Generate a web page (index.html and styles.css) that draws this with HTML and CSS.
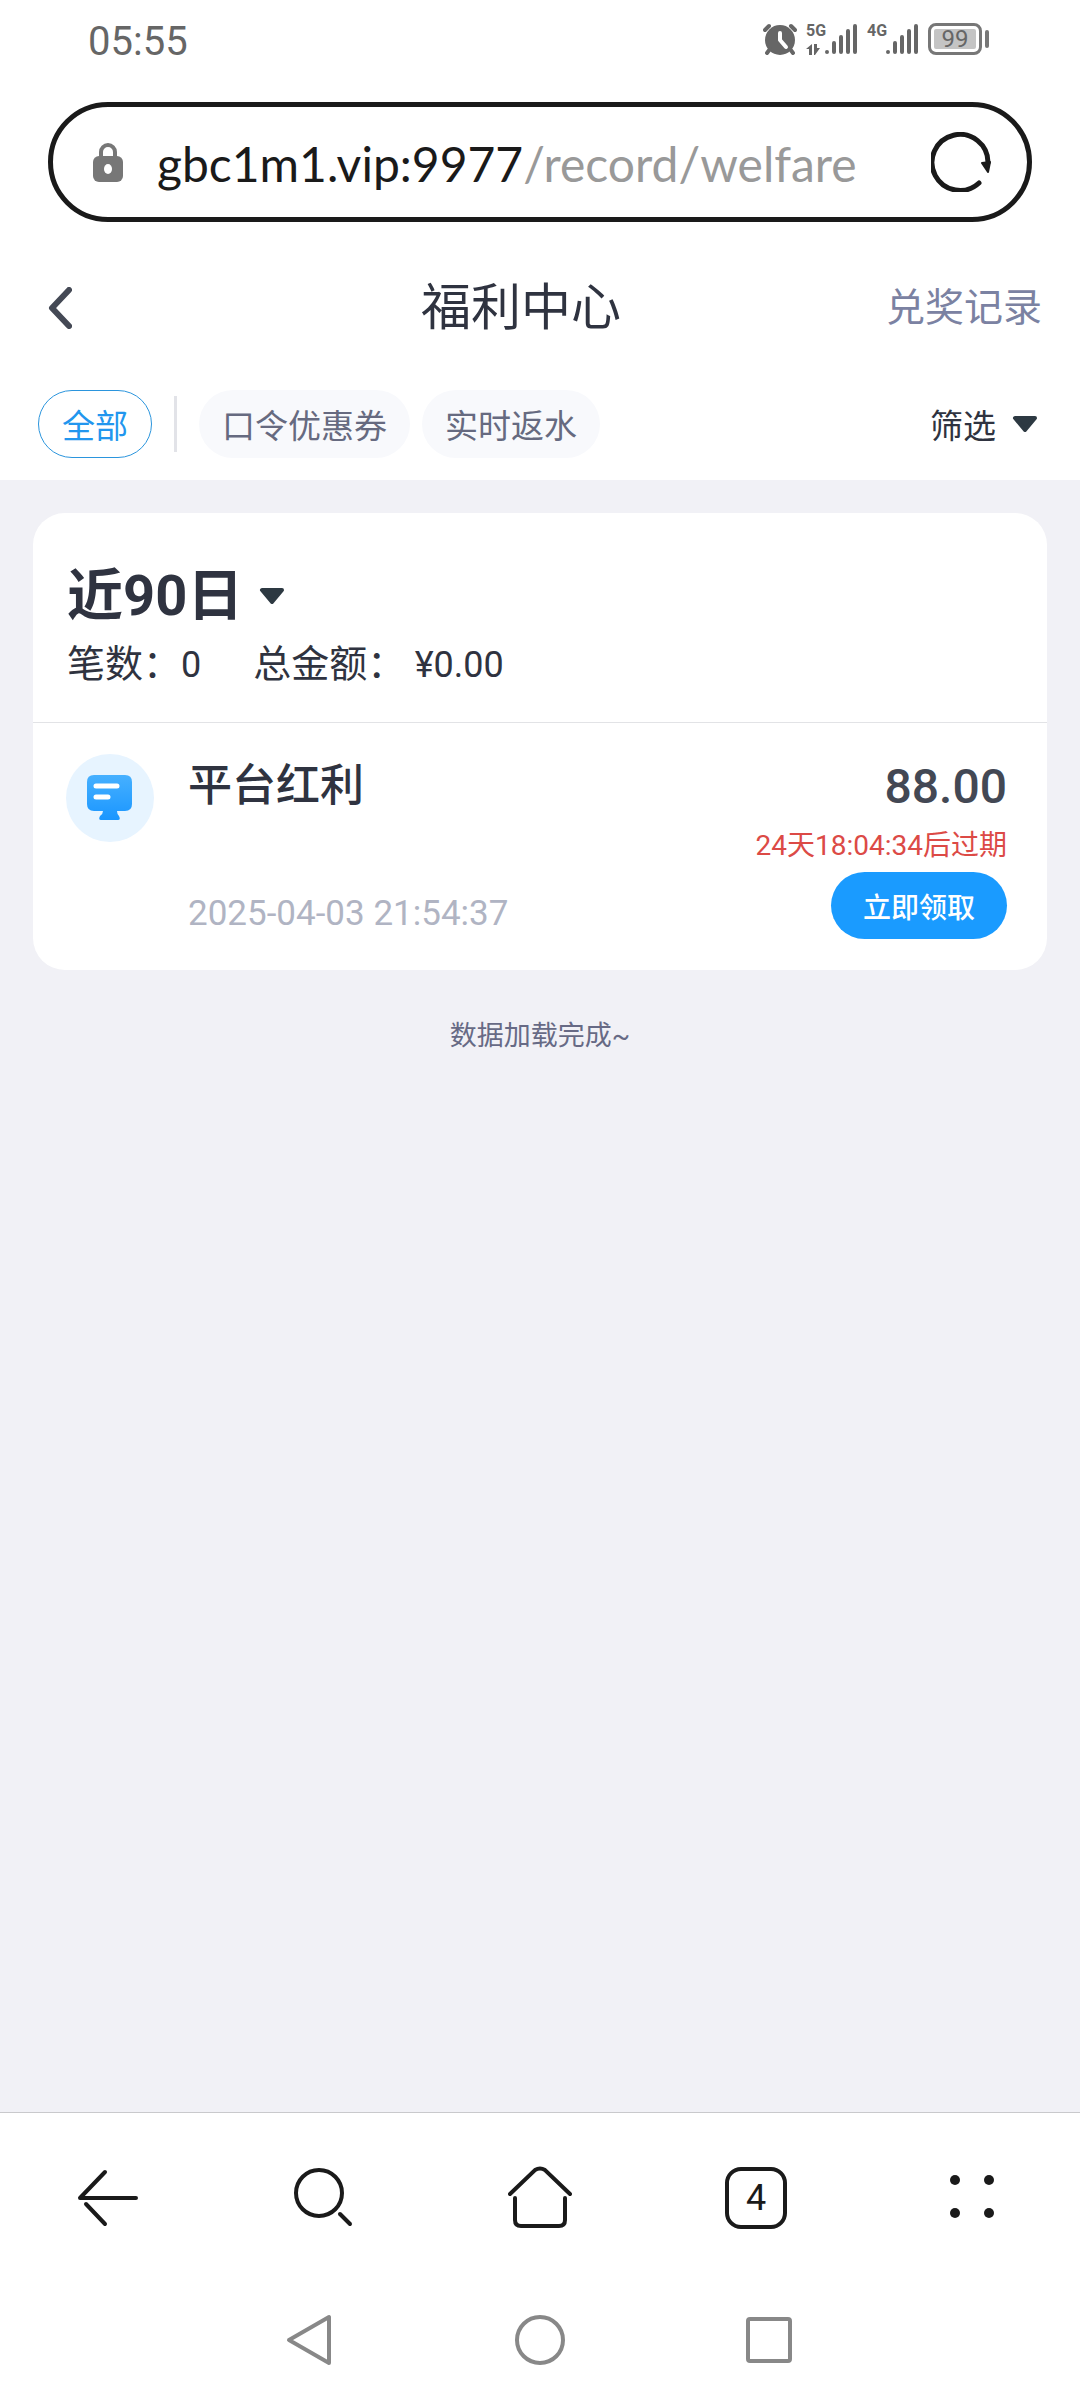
FILE: index.html
```html
<!DOCTYPE html>
<html lang="zh-CN">
<head>
    <meta charset="UTF-8">
    <meta name="viewport" content="width=device-width, initial-scale=1.0">
    <title>福利中心</title>
    <link rel="stylesheet" href="styles.css">
</head>
<body>

<div class="status-bar">
    <span class="clock">05:55</span>
    <div class="status-icons">
        <svg class="alarm" width="34" height="32" viewBox="0 0 34 32">
            <circle cx="17" cy="17" r="15" fill="#666"/>
            <path d="M2 7L6 3M32 7L28 3M7 26L4 30M27 26L30 30" stroke="#666" stroke-width="4" stroke-linecap="round"/>
            <path d="M17 10V17L23 24" fill="none" stroke="#fff" stroke-width="4" stroke-linecap="round" stroke-linejoin="round"/>
        </svg>
        <div class="network">
            <span>5G</span>
            <svg width="14" height="11" viewBox="0 0 14 11" fill="#666"><path d="M6 0V11H3V5H0ZM8 0H11V4H14L9 11H8Z"/></svg>
        </div>
        <svg class="signal" width="34" height="32" viewBox="0 0 34 32" stroke="#666" stroke-width="4" stroke-linecap="round">
            <path d="M3 29V29.1M10 20V29M17 14V29M24 8V29M31 3V29"/>
        </svg>
        <div class="network">
            <span>4G</span>
        </div>
        <svg class="signal" width="34" height="32" viewBox="0 0 34 32" stroke="#666" stroke-width="4" stroke-linecap="round">
            <path d="M3 29V29.1M10 20V29M17 14V29M24 8V29M31 3V29"/>
        </svg>
        <div class="battery"><span>99</span></div>
    </div>
</div>

<div class="address-bar">
    <svg class="lock" width="30" height="40" viewBox="0 0 30 40">
        <path d="M8 18V10A7 7 0 0 1 22 10V18" fill="none" stroke="#777" stroke-width="4"/>
        <rect y="14" width="30" height="26" rx="6" fill="#777"/>
        <ellipse cx="15" cy="27" rx="4" ry="5" fill="#fff"/>
    </svg>
    <div class="url">gbc1m1.vip:9977<span>/record/welfare</span></div>
    <button class="icon-button" aria-label="刷新">
        <svg width="60" height="60" viewBox="0 0 60 60">
            <path d="M48 51A28 28 0 1 1 57 31" fill="none" stroke="#1a1a1a" stroke-width="5" stroke-linecap="round"/>
            <path d="M51 31L59 30L57 40Z" fill="#1a1a1a" stroke="#1a1a1a" stroke-width="2" stroke-linejoin="round"/>
        </svg>
    </button>
</div>

<header class="page-header">
    <button class="icon-button back" aria-label="返回">
        <svg width="24" height="42" viewBox="0 0 24 42">
            <path d="M21 3L4 21L21 39" fill="none" stroke="#444955" stroke-width="6" stroke-linecap="round" stroke-linejoin="round"/>
        </svg>
    </button>
    <h1>福利中心</h1>
    <a href="#records" class="records">兑奖记录</a>
</header>

<nav class="filters">
    <button class="tab active">全部</button>
    <span class="divider"></span>
    <button class="tab">口令优惠券</button>
    <button class="tab">实时返水</button>
    <button class="filter">筛选
        <svg width="26" height="16" viewBox="0 0 26 16"><path d="M3 2H23L13 14Z" fill="#2d3942" stroke="#2d3942" stroke-width="4" stroke-linejoin="round"/></svg>
    </button>
</nav>

<main>
    <section class="card">
        <div class="summary">
            <button class="period">近90日
                <svg width="26" height="16" viewBox="0 0 26 16"><path d="M3 2H23L13 14Z" fill="#2d3942" stroke="#2d3942" stroke-width="4" stroke-linejoin="round"/></svg>
            </button>
            <div class="totals">
                <span>笔数：<b class="num">0</b></span>
                <span>总金额： <b class="num">¥0.00</b></span>
            </div>
        </div>
        <div class="record">
            <div class="record-icon">
                <svg width="46" height="46" viewBox="0 0 46 46">
                    <defs>
                        <linearGradient id="blue" x1="0" y1="0" x2="0" y2="1">
                            <stop offset="0" stop-color="#46b0ff"/>
                            <stop offset="1" stop-color="#1a96ff"/>
                        </linearGradient>
                    </defs>
                    <path d="M7 0H38Q45 0 45 7V29Q45 36 38 36H30Q30 39 32 41Q34 45 31 45H14Q11 45 13 41Q16 39 16 36H7Q0 36 0 29V7Q0 0 7 0Z" fill="url(#blue)"/>
                    <path d="M9 11H30M9 22H21" stroke="#fff" stroke-width="5" stroke-linecap="round"/>
                </svg>
            </div>
            <div class="record-info">
                <h2>平台红利</h2>
                <time>2025-04-03 21:54:37</time>
            </div>
            <div class="record-action">
                <div class="amount">88.00</div>
                <div class="expires">24天18:04:34后过期</div>
                <button class="claim">立即领取</button>
            </div>
        </div>
    </section>
    <p class="load-end">数据加载完成~</p>
</main>

<nav class="browser-bar">
    <button class="icon-button" aria-label="后退">
        <svg width="64" height="64" viewBox="0 0 64 64">
            <path d="M60 32H4L29 6M10 38L29 58" stroke-linejoin="round"/>
        </svg>
    </button>
    <button class="icon-button" aria-label="搜索">
        <svg width="64" height="64" viewBox="0 0 64 64">
            <circle cx="27" cy="27" r="23"/>
            <path d="M48 48L58 58"/>
        </svg>
    </button>
    <button class="icon-button" aria-label="主页">
        <svg width="64" height="64" viewBox="0 0 64 64">
            <path d="M2 28L27 4Q32 1 37 4L62 28M7 32V54Q7 60 13 60H51Q57 60 57 54V32"/>
        </svg>
    </button>
    <button class="icon-button" aria-label="标签页"><span class="tab-count">4</span></button>
    <button class="icon-button" aria-label="菜单">
        <svg width="64" height="64" viewBox="0 0 64 64" class="dots">
            <circle cx="15" cy="14" r="5"/><circle cx="49" cy="14" r="5"/>
            <circle cx="15" cy="47" r="5"/><circle cx="49" cy="47" r="5"/>
        </svg>
    </button>
</nav>

<nav class="system-bar">
    <button class="icon-button" aria-label="系统返回">
        <svg width="54" height="54" viewBox="0 0 54 54"><path d="M46 4V50L6 27Z"/></svg>
    </button>
    <button class="icon-button" aria-label="系统主页">
        <svg width="54" height="54" viewBox="0 0 54 54"><circle cx="27" cy="27" r="23"/></svg>
    </button>
    <button class="icon-button" aria-label="最近任务">
        <svg width="54" height="54" viewBox="0 0 54 54"><rect x="5" y="6" width="42" height="42" rx="2"/></svg>
    </button>
</nav>

</body>
</html>
```
FILE: styles.css
```css
* {
    box-sizing: border-box;
}
body {
    margin: 0;
    min-height: 100vh;
    display: flex;
    flex-direction: column;
    font-family: Roboto, "Noto Sans CJK SC", sans-serif;
    background: #fff;
    color: #2f3340;
}
button {
    padding: 0;
    border: none;
    background: none;
    color: inherit;
    font: inherit;
    cursor: pointer;
}
svg {
    display: block;
    flex: none;
}
h1, h2, p {
    margin: 0;
    font-weight: normal;
}
.icon-button {
    display: flex;
    align-items: center;
    justify-content: center;
}

/* Phone status bar */
.status-bar {
    display: flex;
    justify-content: space-between;
    align-items: flex-end;
    padding: 18px 98px 36px 88px;
    color: #666;
}
.clock {
    font-size: 40px;
    line-height: 48px;
}
.status-icons {
    display: flex;
    align-items: center;
    height: 42px;
    padding-bottom: 12px;
}
.network {
    width: 18px;
    height: 32px;
    display: flex;
    flex-direction: column;
    justify-content: space-between;
    font-size: 16px;
    font-weight: bold;
    line-height: 16px;
}
.alarm {
    margin-right: 9px;
}
.signal {
    margin-right: 9px;
}
.battery {
    position: relative;
    width: 54px;
    height: 32px;
    padding: 3px;
    border: 3px solid #777;
    border-radius: 8px;
}
.battery span {
    display: block;
    background: #c4c4c4;
    border-radius: 2px;
    font-size: 24px;
    line-height: 20px;
    text-align: center;
}
.battery::after {
    content: "";
    position: absolute;
    top: 4px;
    right: -10px;
    width: 4px;
    height: 18px;
    border-radius: 2px;
    background: #777;
}

/* Address bar */
.address-bar {
    display: flex;
    align-items: center;
    height: 120px;
    margin: 0 48px;
    padding: 0 36px 0 40px;
    border: 5px solid #1a1a1a;
    border-radius: 60px;
}
.url {
    flex: 1;
    margin-left: 34px;
    padding-top: 4px;
    font-family: Lato, Roboto, sans-serif;
    font-size: 48px;
    line-height: 60px;
    color: #1a1a1a;
    white-space: nowrap;
}
.url span {
    color: #999;
}

/* Page header */
.page-header {
    display: grid;
    grid-template-columns: 1fr auto 1fr;
    align-items: center;
    height: 168px;
    padding: 4px 38px 0 0;
}
.back {
    justify-self: start;
    padding-left: 48px;
}
h1 {
    font-size: 50px;
    line-height: 60px;
}
.records {
    justify-self: end;
    font-size: 39px;
    line-height: 48px;
    color: #7b82a2;
    text-decoration: none;
}

.filters {
    display: flex;
    align-items: center;
    gap: 12px;
    padding: 0 42px 22px 38px;
}
.tab {
    height: 68px;
    padding: 0 23px;
    border-radius: 34px;
    background: #f8f9fc;
    color: #666a80;
    font-size: 33px;
}
.tab.active {
    border: 1px solid #2b95dd;
    background: #fff;
    color: #2296ee;
}
.divider {
    width: 3px;
    height: 56px;
    margin: 0 10px;
    background: #e2e3e8;
}
.filter {
    display: flex;
    align-items: center;
    gap: 16px;
    margin-left: auto;
    font-size: 33px;
}

/* Records */
main {
    flex: 1;
    padding: 33px;
    background: #f1f1f6;
}
.card {
    border-radius: 32px;
    background: #fff;
}
.summary {
    padding: 51px 34px 33px;
    border-bottom: 1px solid #e2e3e6;
}
.period {
    display: flex;
    align-items: center;
    gap: 16px;
    font-size: 56px;
    line-height: 64px;
    font-weight: bold;
}
.totals {
    display: flex;
    gap: 52px;
    margin-top: 12px;
    font-size: 38px;
    line-height: 48px;
}
.num {
    font-size: 36px;
    font-weight: normal;
}
.record {
    display: flex;
    padding: 31px 40px 31px 33px;
}
.record-icon {
    display: flex;
    align-items: center;
    justify-content: center;
    width: 88px;
    height: 88px;
    border-radius: 50%;
    background: #e7f4ff;
}
.record-info {
    flex: 1;
    display: flex;
    flex-direction: column;
    justify-content: space-between;
    margin-left: 34px;
}
h2 {
    font-size: 44px;
    line-height: 64px;
    font-weight: 500;
}
time {
    font-size: 35px;
    line-height: 50px;
    color: #b0b4c3;
}
.record-action {
    display: flex;
    flex-direction: column;
    align-items: flex-end;
}
.amount {
    font-size: 48px;
    font-weight: 500;
    line-height: 66px;
    color: #434854;
}
.expires {
    margin: 8px 0;
    font-size: 28px;
    line-height: 36px;
    color: #dc4a46;
}
.claim {
    height: 67px;
    padding: 0 32px;
    border-radius: 34px;
    background: #1a9bff;
    color: #fff;
    font-size: 28px;
    font-weight: 500;
}
.load-end {
    margin-top: 46px;
    font-size: 27px;
    line-height: 40px;
    text-align: center;
    color: #676a85;
}

/* Browser toolbar and system navigation */
.browser-bar {
    display: grid;
    grid-template-columns: repeat(5, 1fr);
    height: 170px;
    border-top: 1px solid #c9c9cc;
    fill: none;
    stroke: #1a1a1a;
    stroke-width: 4;
    stroke-linecap: round;
}
.dots {
    fill: #1a1a1a;
    stroke: none;
}
.tab-count {
    width: 62px;
    height: 62px;
    border: 4px solid #1a1a1a;
    border-radius: 16px;
    font-size: 36px;
    line-height: 54px;
    color: #1a1a1a;
}
.system-bar {
    display: flex;
    justify-content: center;
    gap: 176px;
    padding: 31px 0 33px;
    fill: none;
    stroke: #888;
    stroke-width: 4;
    stroke-linejoin: round;
}
```
